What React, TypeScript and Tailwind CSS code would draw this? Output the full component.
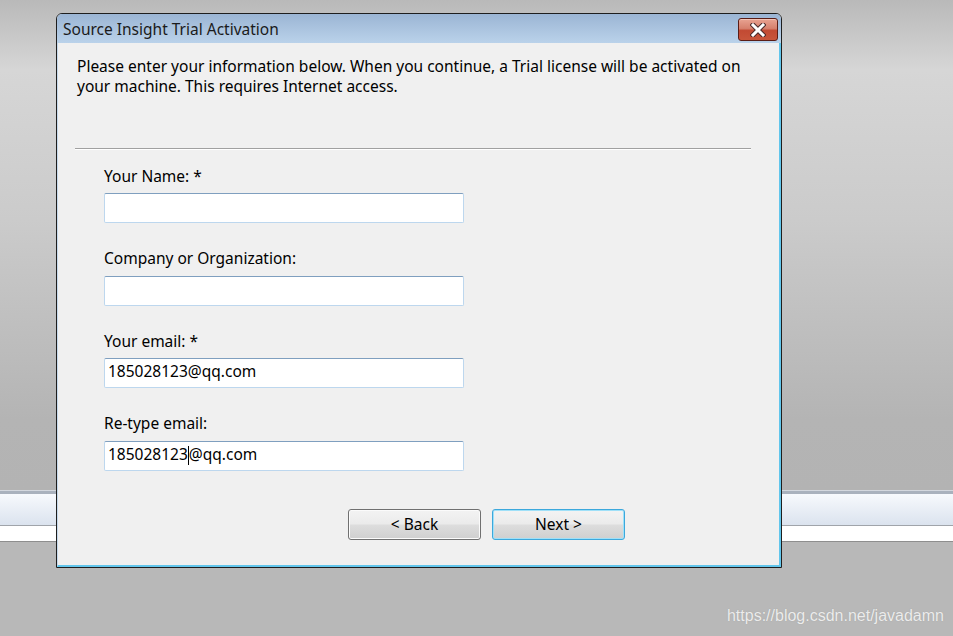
import React from "react";

const uiFont = { fontFamily: '"Segoe UI", "Noto Sans", "Open Sans", sans-serif' };

function CloseButton() {
  return (
    <div className="flex h-[23px] w-[40px] items-center justify-center rounded-[3px] border border-[#5a1d16] bg-[linear-gradient(180deg,#e8a392_0%,#d6806d_45%,#c24a33_55%,#c8553b_100%)] shadow-[inset_0_1px_0_#f2c3b6]">
      <svg width="16" height="14" viewBox="0 0 16 14">
        <path
          d="M3 2 L13 12 M13 2 L3 12"
          stroke="#4a2a2a"
          strokeWidth="5"
          strokeLinecap="square"
        />
        <path
          d="M3 2 L13 12 M13 2 L3 12"
          stroke="#ffffff"
          strokeWidth="3"
          strokeLinecap="square"
        />
      </svg>
    </div>
  );
}

function Field({
  label,
  value,
  caretAfter,
  gap,
  top,
}: {
  label: string;
  value?: string;
  caretAfter?: number;
  gap: string;
  top: string;
}) {
  return (
    <div className={`flex flex-col ${top} ${gap}`}>
      <div className="h-[20px] text-[15.5px] leading-[21px] text-black">{label}</div>
      <div className="flex h-[30px] w-[360px] items-center rounded-[2px] border border-[#bdd7ee] border-t-[#7f9fbf] bg-white pb-[3px] pl-[3px] text-[15.5px] text-black">
        {value && caretAfter !== undefined ? (
          <>
            <span>{value.slice(0, caretAfter)}</span>
            <span className="mt-[2px] inline-block h-[19px] w-px bg-black" />
            <span>{value.slice(caretAfter)}</span>
          </>
        ) : (
          value
        )}
      </div>
    </div>
  );
}

function DialogButton({ children, primary }: { children: React.ReactNode; primary?: boolean }) {
  return (
    <button
      type="button"
      className={`flex h-[31px] w-[133px] items-center justify-center rounded-[3px] border text-[15.5px] text-black bg-[linear-gradient(180deg,#f3f3f3_0%,#ebebeb_48%,#dddddd_52%,#cfcfcf_100%)] ${
        primary
          ? "border-[#3ca8dc] shadow-[inset_0_0_0_1px_#9fe0f8]"
          : "border-[#707070] shadow-[inset_0_0_0_1px_#fbfbfb]"
      }`}
    >
      {children}
    </button>
  );
}

export default function App() {
  return (
    <div className="relative h-[636px] w-[953px] overflow-hidden bg-[#b8b8b8]" style={uiFont}>
      {/* desktop background */}
      <div className="h-[490px] bg-[linear-gradient(180deg,#b9b9b9_0px,#d6d6d6_70px,#cbcbcb_220px,#b4b4b4_420px,#b3b3b3_490px)]" />
      <div className="h-px bg-[#d3d7de]" />
      <div className="h-[3px] bg-[#a9b1bd]" />
      <div className="h-[31px] bg-[linear-gradient(180deg,#f7f9fd,#dbe3ee)]" />
      <div className="h-px bg-[#a0a4aa]" />
      <div className="h-[15px] bg-white" />
      <div className="h-px bg-[#8e8e8e]" />

      <div
        className="absolute right-[9px] top-[606px] text-[16px] leading-[20px] text-[#ececec] [text-shadow:0_0_1px_#9a9a9a]"
        style={{ fontFamily: '"Liberation Sans", Arial, sans-serif' }}
      >
        https://blog.csdn.net/javadamn
      </div>

      {/* dialog window */}
      <div className="absolute left-[56px] top-[13px] flex h-[555px] w-[726px] flex-col rounded-t-[6px] border border-[#1e1e1e] bg-[#f0f0f0]">
        <div className="flex h-[29px] items-start justify-between rounded-t-[5px] bg-[linear-gradient(180deg,#9bb5d4,#bad2ea)] pl-[6px] pr-[3px]">
          <div className="pt-[5px] text-[15.5px] leading-[20px] text-[#1b1b1b]">
            Source Insight Trial Activation
          </div>
          <div className="pt-[4px]">
            <CloseButton />
          </div>
        </div>

        <div className="flex flex-1 flex-col border-b-2 border-l border-r-2 border-b-[#62c6ec] border-l-[#c6d9eb] border-r-[#62c6ec]">
          <p className="whitespace-nowrap pl-[19px] pt-[13px] text-[15.5px] leading-[20px] text-black">
            Please enter your information below. When you continue, a Trial license will be activated on
            <br />
            your machine. This requires Internet access.
          </p>

          <div className="ml-[17px] mt-[52px] w-[676px] border-t border-b border-t-[#a0a0a0] border-b-white" />

          <div className="flex flex-col pl-[46px]">
            <Field label="Your Name: *" top="mt-[16px]" gap="gap-[7px]" />
            <Field label="Company or Organization:" top="mt-[25px]" gap="gap-[8px]" />
            <Field
              label="Your email: *"
              value="185028123@qq.com"
              top="mt-[25px]"
              gap="gap-[7px]"
            />
            <Field
              label="Re-type email:"
              value="185028123@qq.com"
              caretAfter={9}
              top="mt-[25px]"
              gap="gap-[8px]"
            />
          </div>

          <div className="mt-[38px] flex gap-[11px] pl-[290px]">
            <DialogButton>&lt; Back</DialogButton>
            <DialogButton primary>Next &gt;</DialogButton>
          </div>
        </div>
      </div>
    </div>
  );
}
